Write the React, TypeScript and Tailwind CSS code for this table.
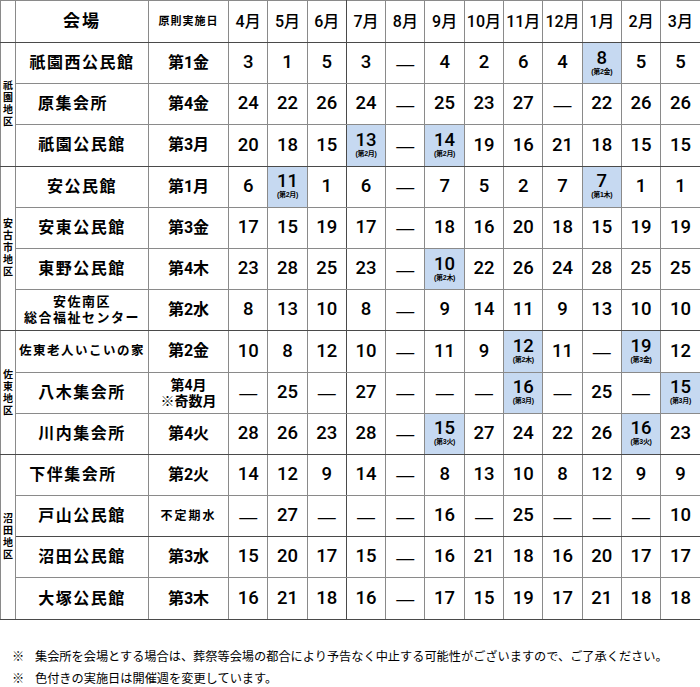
import React from "react";

type Cell = string | [string, string];

type Row = {
  name: string[];
  nameSize?: string;
  shift?: boolean;
  day: string[];
  daySize?: string;
  cells: Cell[];
  darkBottom?: boolean;
};

type Group = { label: string; rows: Row[] };

const months = ["4月", "5月", "6月", "7月", "8月", "9月", "10月", "11月", "12月", "1月", "2月", "3月"];

const D = "—";

const groups: Group[] = [
  {
    label: "祇園地区",
    rows: [
      { name: ["祇園西公民館"], day: ["第1金"], cells: ["3", "1", "5", "3", D, "4", "2", "6", "4", ["8", "(第2金)"], "5", "5"] },
      { name: ["原集会所"], shift: true, day: ["第4金"], cells: ["24", "22", "26", "24", D, "25", "23", "27", D, "22", "26", "26"] },
      { name: ["祇園公民館"], day: ["第3月"], cells: ["20", "18", "15", ["13", "(第2月)"], D, ["14", "(第2月)"], "19", "16", "21", "18", "15", "15"] },
    ],
  },
  {
    label: "安古市地区",
    rows: [
      { name: ["安公民館"], day: ["第1月"], cells: ["6", ["11", "(第2月)"], "1", "6", D, "7", "5", "2", "7", ["7", "(第1木)"], "1", "1"] },
      { name: ["安東公民館"], day: ["第3金"], cells: ["17", "15", "19", "17", D, "18", "16", "20", "18", "15", "19", "19"] },
      { name: ["東野公民館"], day: ["第4木"], cells: ["23", "28", "25", "23", D, ["10", "(第2木)"], "22", "26", "24", "28", "25", "25"] },
      { name: ["安佐南区", "総合福祉センター"], nameSize: "text-[13px] leading-[16px]", day: ["第2水"], cells: ["8", "13", "10", "8", D, "9", "14", "11", "9", "13", "10", "10"] },
    ],
  },
  {
    label: "佐東地区",
    rows: [
      { name: ["佐東老人いこいの家"], nameSize: "text-[12.5px]", day: ["第2金"], cells: ["10", "8", "12", "10", D, "11", "9", ["12", "(第2木)"], "11", D, ["19", "(第3金)"], "12"] },
      { name: ["八木集会所"], day: ["第4月", "※奇数月"], daySize: "text-[14px] leading-[16px]", cells: [D, "25", D, "27", D, D, D, ["16", "(第3月)"], D, "25", D, ["15", "(第3月)"]] },
      { name: ["川内集会所"], day: ["第4火"], cells: ["28", "26", "23", "28", D, ["15", "(第3火)"], "27", "24", "22", "26", ["16", "(第3火)"], "23"] },
    ],
  },
  {
    label: "沼田地区",
    rows: [
      { name: ["下伴集会所"], shift: true, day: ["第2火"], cells: ["14", "12", "9", "14", D, "8", "13", "10", "8", "12", "9", "9"] },
      { name: ["戸山公民館"], day: ["不定期水"], daySize: "text-[12px] tracking-[2px]", darkBottom: true, cells: [D, "27", D, D, D, "16", D, "25", D, D, D, "10"] },
      { name: ["沼田公民館"], day: ["第3水"], cells: ["15", "20", "17", "15", D, "16", "21", "18", "16", "20", "17", "17"] },
      { name: ["大塚公民館"], day: ["第3木"], cells: ["16", "21", "18", "16", D, "17", "15", "19", "17", "21", "18", "18"] },
    ],
  },
];

const font = { fontFamily: '"Liberation Sans", "Noto Sans CJK JP", sans-serif' };
const digits = { fontFamily: 'Roboto, "Noto Sans CJK JP", sans-serif' };

function MonthCell({ cell, col, dark }: { cell: Cell; col: number; dark: boolean }) {
  const base = "border border-[#8a8a8a] p-0 text-center align-middle";
  const right = col === 2 ? " border-r-[#4a4a4a]" : "";
  const bottom = dark ? " border-b-[#4a4a4a]" : "";
  if (Array.isArray(cell)) {
    return (
      <td className={base + right + bottom + " bg-[#c6d9f1]"}>
        <div className="flex flex-col items-center leading-none">
          <span className="text-[18.5px] font-medium leading-[18px] -mt-[2px]" style={digits}>
            {cell[0]}
          </span>
          <span className="text-[7px] font-bold leading-[8px] mt-[1px] tracking-[-0.3px]">{cell[1]}</span>
        </div>
      </td>
    );
  }
  if (cell === D) {
    // dash is wider in Liberation than in Roboto
    return <td className={base + right + bottom + " text-[18px] pt-[2px]"}>{cell}</td>;
  }
  return (
    <td className={base + right + bottom + " text-[18.5px] font-medium"} style={digits}>
      {cell}
    </td>
  );
}

export default function App() {
  return (
    <div className="w-[700px] h-[687px] bg-white text-black" style={font}>
      <table className="border-collapse table-fixed w-[700px]">
        <colgroup>
          <col className="w-[15px]" />
          <col className="w-[133px]" />
          <col className="w-[80px]" />
          {months.map((m) => (
            <col key={m} className="w-[39.3px]" />
          ))}
        </colgroup>
        <thead>
          <tr className="h-[42px]">
            <td className="border border-[#8a8a8a] border-b-[#4a4a4a] p-0" />
            <td className="border border-[#8a8a8a] border-b-[#4a4a4a] p-0 text-center text-[17px] font-bold tracking-[2px]">会場</td>
            <td className="border border-[#8a8a8a] border-b-[#4a4a4a] p-0 text-center text-[11px] font-bold tracking-[1px]">原則実施日</td>
            {months.map((m, i) => (
              <td
                key={m}
                style={digits}
                className={
                  "border border-[#8a8a8a] border-b-[#4a4a4a] p-0 text-center text-[16px] font-medium whitespace-nowrap" +
                  (i === 2 ? " border-r-[#4a4a4a]" : "")
                }
              >
                {m}
              </td>
            ))}
          </tr>
        </thead>
        <tbody>
          {groups.map((g) =>
            g.rows.map((r, ri) => {
              const last = ri === g.rows.length - 1;
              const dark = last || !!r.darkBottom;
              const b = dark ? " border-b-[#4a4a4a]" : "";
              return (
                <tr key={r.name.join("")} className="h-[41.2px]">
                  {ri === 0 && (
                    <td rowSpan={g.rows.length} className="border border-[#8a8a8a] border-b-[#4a4a4a] p-0 align-middle">
                      <div className="flex flex-col items-center text-[10px] font-bold leading-[12px]">
                        {g.label.split("").map((c, i) => (
                          <span key={i}>{c}</span>
                        ))}
                      </div>
                    </td>
                  )}
                  <td className={"border border-[#8a8a8a] p-0 text-center font-bold" + b}>
                    <div className={(r.nameSize ?? "text-[16px]") + " tracking-[1.5px] flex flex-col items-center" + (r.shift ? " pr-[18px]" : "")}>
                      {r.name.map((n) => (
                        <span key={n}>{n}</span>
                      ))}
                    </div>
                  </td>
                  <td className={"border border-[#8a8a8a] p-0 text-center font-bold" + b} style={digits}>
                    <div className={(r.daySize ?? "text-[16px]") + " flex flex-col items-center"}>
                      {r.day.map((d) => (
                        <span key={d}>{d}</span>
                      ))}
                    </div>
                  </td>
                  {r.cells.map((c, ci) => (
                    <MonthCell key={ci} cell={c} col={ci} dark={dark} />
                  ))}
                </tr>
              );
            })
          )}
        </tbody>
      </table>
      <div className="mt-[26px] pl-[12px] text-[12.2px] leading-[22px]">
        <p className="flex">
          <span className="w-[23px]">※</span>
          <span>集会所を会場とする場合は、葬祭等会場の都合により予告なく中止する可能性がございますので、ご了承ください。</span>
        </p>
        <p className="flex">
          <span className="w-[23px]">※</span>
          <span>色付きの実施日は開催週を変更しています。</span>
        </p>
      </div>
    </div>
  );
}
